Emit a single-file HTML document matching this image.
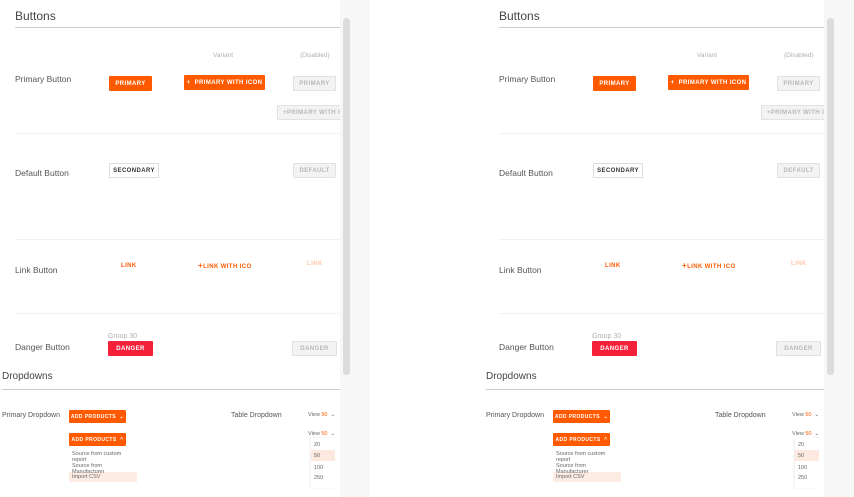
<!DOCTYPE html>
<html><head><meta charset="utf-8"><style>
*{margin:0;padding:0;box-sizing:border-box}
body{width:854px;height:497px;background:#fff;position:relative;overflow:hidden;font-family:"Liberation Sans",sans-serif}
.p{position:absolute;top:0;width:340px;height:497px;overflow:hidden;background:#fff}
.p *{position:absolute;white-space:nowrap}
.g{position:absolute;top:0;height:497px;background:#f7f7f8}
.sb{position:absolute;top:18px;width:7px;height:357px;border-radius:4px;background:#dcdcdf}
.h{font-size:12px;color:#444}
.l{font-size:8.5px;color:#555}
.s{font-size:6.5px;color:#b0b0b0}
.b{height:15px;font-size:6px;font-weight:bold;letter-spacing:.4px;display:flex;align-items:center;justify-content:center;border-radius:1px}
.o{background:#ff5a00;color:#fff}
.d{background:#f3f3f3;border:1px solid #e2e2e2;color:#b8b8b8}
.hr{height:1px;background:#f2f2f2}
.lk{font-size:6px;font-weight:bold;color:#ff5a00;letter-spacing:.4px}
.m{font-size:5.5px;color:#666}
</style></head><body>
<div class="g" style="left:340px;width:30px"></div><div class="sb" style="left:343px"></div>
<div class="g" style="left:824px;width:30px"></div><div class="sb" style="left:827px"></div>

<div class="p" style="left:0">
<div class="h" style="left:15px;top:9px">Buttons</div>
<div style="left:15px;top:27px;width:325px;height:1px;background:#ccc"></div>
<div class="s" style="left:213px;top:52px">Variant</div>
<div class="s" style="left:300px;top:52px">(Disabled)</div>
<div class="l" style="left:15px;top:74px">Primary Button</div>
<div class="b o" style="left:109px;top:76px;width:43px">PRIMARY</div>
<div class="b o" style="left:184px;top:75px;width:81px">+&nbsp; PRIMARY WITH ICON</div>
<div class="b d" style="left:293px;top:76px;width:43px">PRIMARY</div>
<div class="b d" style="left:277px;top:105px;width:80px;justify-content:flex-start;padding-left:5px">+PRIMARY WITH ICON</div>
<div class="hr" style="left:15px;top:133px;width:325px"></div>
<div class="l" style="left:15px;top:168px">Default Button</div>
<div class="b" style="left:109px;top:163px;width:50px;border:1px solid #ddd;color:#333">SECONDARY</div>
<div class="b d" style="left:293px;top:163px;width:43px">DEFAULT</div>
<div class="hr" style="left:15px;top:239px;width:325px"></div>
<div class="l" style="left:15px;top:265px">Link Button</div>
<div class="lk" style="left:121px;top:263px">LINK</div>
<div class="lk" style="left:198px;top:261px"><span style="position:static;font-size:8px">+</span>LINK WITH ICO</div>
<div class="lk" style="left:307px;top:261px;color:#ffc6ad">LINK</div>
<div class="hr" style="left:15px;top:313px;width:325px"></div>
<div class="s" style="left:108px;top:333px;font-size:7px">Group 30</div>
<div class="l" style="left:15px;top:342px">Danger Button</div>
<div class="b" style="left:108px;top:341px;width:45px;background:#f5203a;color:#fff">DANGER</div>
<div class="b d" style="left:292px;top:341px;width:45px">DANGER</div>
<div class="h" style="left:2px;top:371px;font-size:10px">Dropdowns</div>
<div style="left:2px;top:389px;width:338px;height:1px;background:#ccc"></div>
<div class="l" style="left:2px;top:412px;font-size:7px">Primary Dropdown</div>
<div class="b o" style="left:69px;top:410px;width:57px;height:13px;font-size:5px">ADD PRODUCTS &nbsp;⌄</div>
<div class="l" style="left:231px;top:412px;font-size:7px">Table Dropdown</div>
<div class="m" style="left:308px;top:412px">View <span style="position:static;color:#ff5a00">50</span> &nbsp;⌄</div>
<div class="b o" style="left:69px;top:433px;width:57px;height:13px;font-size:5px">ADD PRODUCTS &nbsp;^</div>
<div class="m" style="left:308px;top:431px">View <span style="position:static;color:#ff5a00">50</span> &nbsp;⌄</div>
<div style="left:311px;top:438px;width:24px;height:50px;background:#fff;box-shadow:-1px 0 2px rgba(0,0,0,.08)"></div>
<div style="left:311px;top:450px;width:24px;height:11px;background:#fde9df"></div>
<div class="m" style="left:314px;top:442px">20</div>
<div class="m" style="left:314px;top:453px">50</div>
<div class="m" style="left:314px;top:465px">100</div>
<div class="m" style="left:314px;top:475px">250</div>
<div style="left:69px;top:472px;width:68px;height:10px;background:#fdece4"></div>
<div class="m" style="left:72px;top:451px">Source from custom</div>
<div class="m" style="left:72px;top:457px">report</div>
<div class="m" style="left:72px;top:463px">Source from</div>
<div class="m" style="left:72px;top:469px">Manufacturer</div>
<div class="m" style="left:72px;top:474px">Import CSV</div>
</div>
<script>
var a=document.querySelector('.p'),c=a.cloneNode(true);c.style.left='484px';document.body.appendChild(c);
</script>
</body></html>
